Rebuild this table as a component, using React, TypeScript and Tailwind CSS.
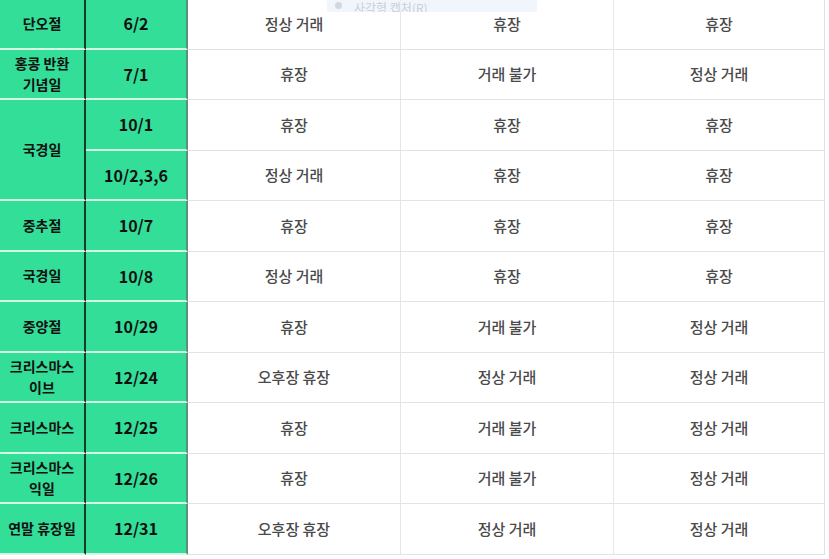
import React from 'react';

type Row = {
  name?: string;
  span?: number;
  date: string;
  a: string;
  b: string;
  c: string;
};

const rows: Row[] = [
  { name: '단오절', date: '6/2', a: '정상 거래', b: '휴장', c: '휴장' },
  { name: '홍콩 반환\n기념일', date: '7/1', a: '휴장', b: '거래 불가', c: '정상 거래' },
  { name: '국경일', span: 2, date: '10/1', a: '휴장', b: '휴장', c: '휴장' },
  { date: '10/2,3,6', a: '정상 거래', b: '휴장', c: '휴장' },
  { name: '중추절', date: '10/7', a: '휴장', b: '휴장', c: '휴장' },
  { name: '국경일', date: '10/8', a: '정상 거래', b: '휴장', c: '휴장' },
  { name: '중양절', date: '10/29', a: '휴장', b: '거래 불가', c: '정상 거래' },
  { name: '크리스마스\n이브', date: '12/24', a: '오후장 휴장', b: '정상 거래', c: '정상 거래' },
  { name: '크리스마스', date: '12/25', a: '휴장', b: '거래 불가', c: '정상 거래' },
  { name: '크리스마스\n익일', date: '12/26', a: '휴장', b: '거래 불가', c: '정상 거래' },
  { name: '연말 휴장일', date: '12/31', a: '오후장 휴장', b: '정상 거래', c: '정상 거래' },
];

const greenCell =
  'flex items-center justify-center text-center bg-[#33de99] text-[#111] font-bold border-b-2 border-[#d6f6e6]';
const whiteCell =
  'flex items-center justify-center bg-white text-[#4a4a4a] text-[15px] font-medium border-b border-[#e3e3e3]';

export default function App() {
  return (
    <div
      className="relative w-[829px] h-[559px] overflow-hidden bg-white"
      style={{ fontFamily: '"Noto Sans CJK KR", "Noto Sans", sans-serif' }}
    >
      <div className="mt-[-1px] grid w-[825px] grid-cols-[86px_102px_213px_213px_211px] auto-rows-[50.5px]">
        {rows.map((r, i) => (
          <React.Fragment key={i}>
            {r.name !== undefined && (
              <div
                className={`${greenCell} text-[14px] leading-[21px] whitespace-pre-line border-r-2 border-r-[#1c3a2a] ${
                  r.span === 2 ? 'row-span-2' : ''
                }`}
              >
                {r.name}
              </div>
            )}
            <div className={`${greenCell} text-[16px] border-r-2 border-r-[#5f8f74]`}>{r.date}</div>
            <div className={`${whiteCell} border-r border-r-[#e6e6e6]`}>{r.a}</div>
            <div className={`${whiteCell} border-r border-r-[#e6e6e6]`}>{r.b}</div>
            <div className={`${whiteCell} border-r border-r-[#e0e0e0]`}>{r.c}</div>
          </React.Fragment>
        ))}
      </div>

      {/* faded capture menu remnant */}
      <div className="absolute left-[327px] top-0 flex h-[12px] w-[210px] items-end gap-3 overflow-hidden bg-[#eef4fb]/80 pl-[8px] text-[12px] leading-[14px] text-[#c9ced6]">
        <span className="mb-[3px] block h-[7px] w-[7px] rounded-full bg-[#d3d8df]" />
        <span className="-mb-[3px]">사각형 캡처(R)</span>
      </div>
    </div>
  );
}
